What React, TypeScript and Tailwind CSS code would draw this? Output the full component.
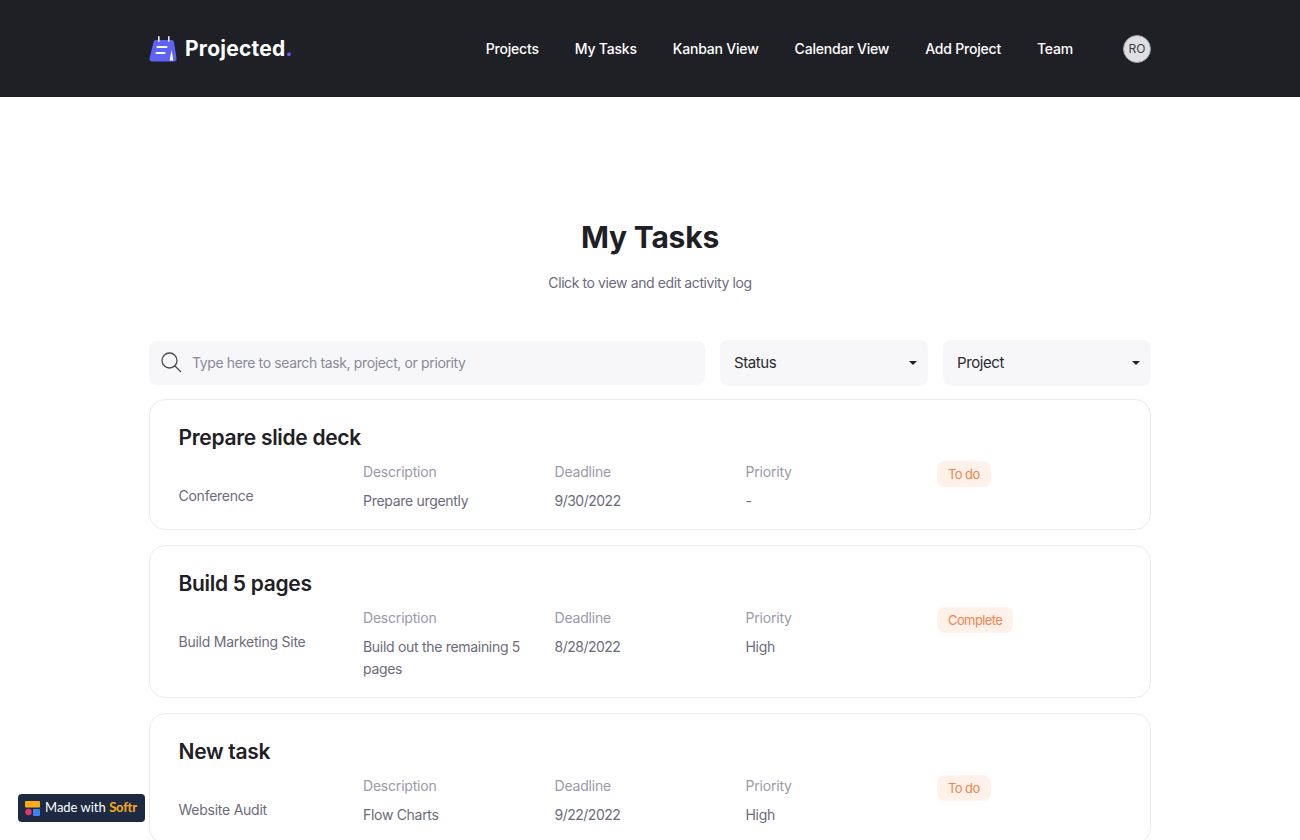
const tasks = [
  { title: "Prepare slide deck", project: "Conference", description: "Prepare urgently", deadline: "9/30/2022", priority: "-", status: "To do" },
  { title: "Build 5 pages", project: "Build Marketing Site", description: "Build out the remaining 5 pages", deadline: "8/28/2022", priority: "High", status: "Complete" },
  { title: "New task", project: "Website Audit", description: "Flow Charts", deadline: "9/22/2022", priority: "High", status: "To do" },
];

const navLinks = ["Projects", "My Tasks", "Kanban View", "Calendar View", "Add Project", "Team"];

const Logo = () => (
  <div className="flex items-center gap-[8px]">
    <svg width="28" height="28" viewBox="0 0 28 28">
      <path d="M7 5h15.5a2.5 2.5 0 0 1 2.5 2l2.5 16.5a2.5 2.5 0 0 1-2.5 3H3a2.5 2.5 0 0 1-2.5-3L4.5 7A2.5 2.5 0 0 1 7 5z" fill="#5d63f6" />
      <rect x="9" y="1" width="1.6" height="6" rx="0.8" fill="#e6e7ff" />
      <rect x="19" y="1" width="1.6" height="6" rx="0.8" fill="#e6e7ff" />
      <rect x="7.5" y="11" width="11" height="2" rx="1" fill="#ffffff" />
      <rect x="6.5" y="17" width="10" height="2" rx="1" fill="#ffffff" />
      <path d="M22.5 15l1.8 10.5h-3.6z" fill="#ffffff" />
    </svg>
    <span className="text-[21px] font-bold tracking-[0.25px] text-white">
      Projected<span className="text-[#5d63f6]">.</span>
    </span>
  </div>
);

const Field = ({ label, value, className, valueClass }: { label: string; value: string; className: string; valueClass: string }) => (
  <div className={className}>
    <p className="text-[14px] leading-[22px] tracking-[-0.2px] text-[#9a9aa8]">{label}</p>
    <p className={`mt-[7px] text-[14px] leading-[22px] text-[#6b6b7b] ${valueClass}`}>{value}</p>
  </div>
);

const TaskCard = ({ task }: { task: (typeof tasks)[number] }) => (
  <div className="rounded-[16px] border border-[#ebebf0] bg-white px-[28.5px] pt-[22px] pb-[17px]">
    <h2 className="text-[21px] font-semibold leading-[32px] tracking-[-0.3px] text-[#1f2025]">{task.title}</h2>
    <div className="mt-[7px] flex items-start">
      <p className="mt-[24px] w-[184.5px] text-[14px] leading-[22px] tracking-[-0.25px] text-[#6b6b7b]">{task.project}</p>
      <Field label="Description" value={task.description} className="w-[191.5px] pr-[30px]" valueClass="tracking-[-0.3px]" />
      <Field label="Deadline" value={task.deadline} className="w-[191px]" valueClass="tracking-[-0.5px]" />
      <Field label="Priority" value={task.priority} className="w-[191.5px]" valueClass="tracking-[-0.3px]" />
      <span className="rounded-[8px] bg-[#fdf1ea] px-[11px] py-[3px] text-[13px] leading-[20px] tracking-[-0.6px] text-[#f0844a]">
        {task.status}
      </span>
    </div>
  </div>
);

const Select = ({ label }: { label: string }) => (
  <div className="flex h-[46px] w-[208.5px] items-center justify-between rounded-[8px] bg-[#f7f7f9] pr-[11px] pl-[14.5px]">
    <span className="text-[15px] tracking-[-0.4px] text-[#2a2a30]">{label}</span>
    <span className="h-0 w-0 border-x-[4px] border-t-[4px] border-x-transparent border-t-[#1f2025]" />
  </div>
);

export default function App() {
  return (
    <div className="relative h-[840px] overflow-hidden bg-white font-['Inter',sans-serif]">
      <header className="h-[97px] bg-[#1f2025]">
        <div className="mx-auto flex h-full w-[1002px] items-center justify-between">
          <Logo />
          <nav className="flex items-center">
            <div className="flex items-center gap-[36px]">
              {navLinks.map((link) => (
                <a key={link} className="text-[14px] font-medium tracking-[-0.2px] text-white">
                  {link}
                </a>
              ))}
            </div>
            <div className="ml-[50px] flex h-[28px] w-[28px] items-center justify-center rounded-full border border-[#9a9aa5] bg-[#dfdfe3] text-[12px] text-[#3a3a42]">
              RO
            </div>
          </nav>
        </div>
      </header>

      <main className="mx-auto w-[1002px]">
        <h1 className="mt-[119px] text-center text-[30px] font-bold leading-[42px] tracking-[-0.2px] text-[#1f2025]">My Tasks</h1>
        <p className="mt-[14px] text-center text-[14px] leading-[22px] tracking-[-0.4px] text-[#6b6b7b]">Click to view and edit activity log</p>

        <div className="mt-[46px] flex items-center gap-[14.5px]">
          <div className="flex h-[44px] flex-1 items-center gap-[10px] rounded-[8px] bg-[#f7f7f9] pb-[2px] pl-[11px]">
            <svg width="22" height="22" viewBox="0 0 22 22" fill="none" stroke="#4a4a52" strokeWidth="1.3" strokeLinecap="round">
              <circle cx="9.5" cy="9.5" r="7.5" />
              <path d="M15 15l5.5 5.5" />
            </svg>
            <span className="text-[14px] tracking-[-0.37px] text-[#8a8a95]">Type here to search task, project, or priority</span>
          </div>
          <Select label="Status" />
          <Select label="Project" />
        </div>

        <div className="mt-[13px] flex flex-col gap-[15px]">
          {tasks.map((task) => (
            <TaskCard key={task.title} task={task} />
          ))}
        </div>
      </main>

      <div className="absolute bottom-[18px] left-[18px] flex h-[28px] w-[127px] items-center gap-[5px] rounded-[4px] bg-[#1e2a42] pl-[7px] font-['Lato',sans-serif] text-[13px]">
        <svg width="15" height="15" viewBox="0 0 15 15">
          <rect x="0" y="0" width="15" height="6.5" rx="1" fill="#fbab18" />
          <circle cx="3.5" cy="11" r="3.2" fill="#e8326b" />
          <rect x="8" y="8" width="7" height="7" rx="1" fill="#3b82f6" />
        </svg>
        <span className="text-white">Made with <span className="font-bold tracking-[-0.2px] text-[#fbab18]">Softr</span></span>
      </div>
    </div>
  );
}
